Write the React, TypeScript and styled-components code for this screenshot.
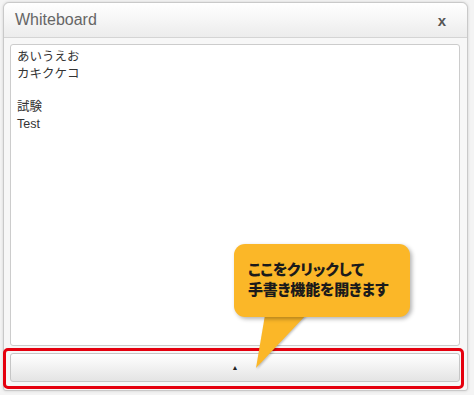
import React from 'react'
import styled, { createGlobalStyle } from 'styled-components'

const GlobalStyle = createGlobalStyle`
  html, body {
    margin: 0;
    padding: 0;
    background: #ffffff;
  }
  body {
    font-family: "Liberation Sans", Arial, "Noto Sans CJK JP", sans-serif;
  }
`

const Page = styled.div`
  width: 474px;
  height: 395px;
  padding: 2px 0 0 3px;
  box-sizing: border-box;
  background: #f4f4f4;
`

const Dialog = styled.div`
  position: relative;
  width: 465px;
  height: 389px;
  box-sizing: border-box;
  display: flex;
  flex-direction: column;
  border: 1px solid #c9c9c9;
  border-radius: 6px 6px 3px 3px;
  background: #f7f7f7;
  box-shadow: 0 0 3px rgba(0, 0, 0, 0.15);
`

const Header = styled.div`
  height: 34px;
  flex: none;
  display: flex;
  align-items: center;
  justify-content: space-between;
  padding: 0 21px 0 11px;
  background: linear-gradient(#ffffff, #ececec);
  border-bottom: 1px solid #d4d4d4;
  border-radius: 6px 6px 0 0;
`

const Title = styled.div`
  font-size: 16px;
  color: #666;
`

const Close = styled.div`
  font-size: 15px;
  font-weight: bold;
  color: #555;
`

const Body = styled.div`
  flex: 1;
  display: flex;
  flex-direction: column;
  gap: 7px;
  padding: 6px 7px 8px 6px;
`

const TextArea = styled.div`
  flex: 1;
  background: #fff;
  border: 1px solid #cccccc;
  border-radius: 3px;
  padding: 4px 6px;
  font-size: 12.5px;
  line-height: 16.8px;
  color: #333;
  font-family: "Liberation Sans", Arial, "Noto Sans CJK JP", sans-serif;
`

const Line = styled.div`
  min-height: 16.8px;
`

const ToggleButton = styled.div`
  height: 27px;
  flex: none;
  display: flex;
  align-items: center;
  justify-content: center;
  border: 1px solid #c6c6c6;
  border-radius: 3px;
  background: linear-gradient(#ffffff, #e4e4e4);
  font-size: 7px;
  color: #222;
`

const Highlight = styled.div`
  position: absolute;
  left: -1px;
  top: 345px;
  width: 461px;
  height: 41px;
  box-sizing: border-box;
  border: 3.5px solid #e5000e;
  border-radius: 5px;
  pointer-events: none;
`

const Callout = styled.div`
  position: absolute;
  left: 230px;
  top: 241px;
  width: 176px;
  height: 73px;
  box-sizing: border-box;
  padding: 15px 0 0 14px;
  background: #fbb728;
  border-radius: 11px;
  box-shadow: 2px 2px 4px rgba(0, 0, 0, 0.3);
  font-family: "Noto Sans CJK JP", sans-serif;
  font-weight: 900;
  font-size: 15px;
  line-height: 20px;
  color: #1b1b1b;
  font-feature-settings: "palt";
  letter-spacing: -0.2px;
`

const Tail = styled.svg`
  position: absolute;
  left: 246px;
  top: 312px;
  overflow: visible;
  filter: drop-shadow(1px 1px 1px rgba(0, 0, 0, 0.25));
`

const lines = ['あいうえお', 'カキクケコ', '', '試験', 'Test']

export default function App() {
  return (
    <>
      <GlobalStyle />
      <Page>
        <Dialog>
          <Header>
            <Title>Whiteboard</Title>
            <Close>x</Close>
          </Header>
          <Body>
            <TextArea>
              {lines.map((l, i) => (
                <Line key={i}>{l}</Line>
              ))}
            </TextArea>
            <ToggleButton>▲</ToggleButton>
          </Body>
          <Highlight />
          <Tail width="60" height="60">
            <path d="M15 0 L56 0 L6 53 Z" fill="#fbb728" />
          </Tail>
          <Callout>
            ここをクリックして
            <br />
            手書き機能を開きます
          </Callout>
        </Dialog>
      </Page>
    </>
  )
}
